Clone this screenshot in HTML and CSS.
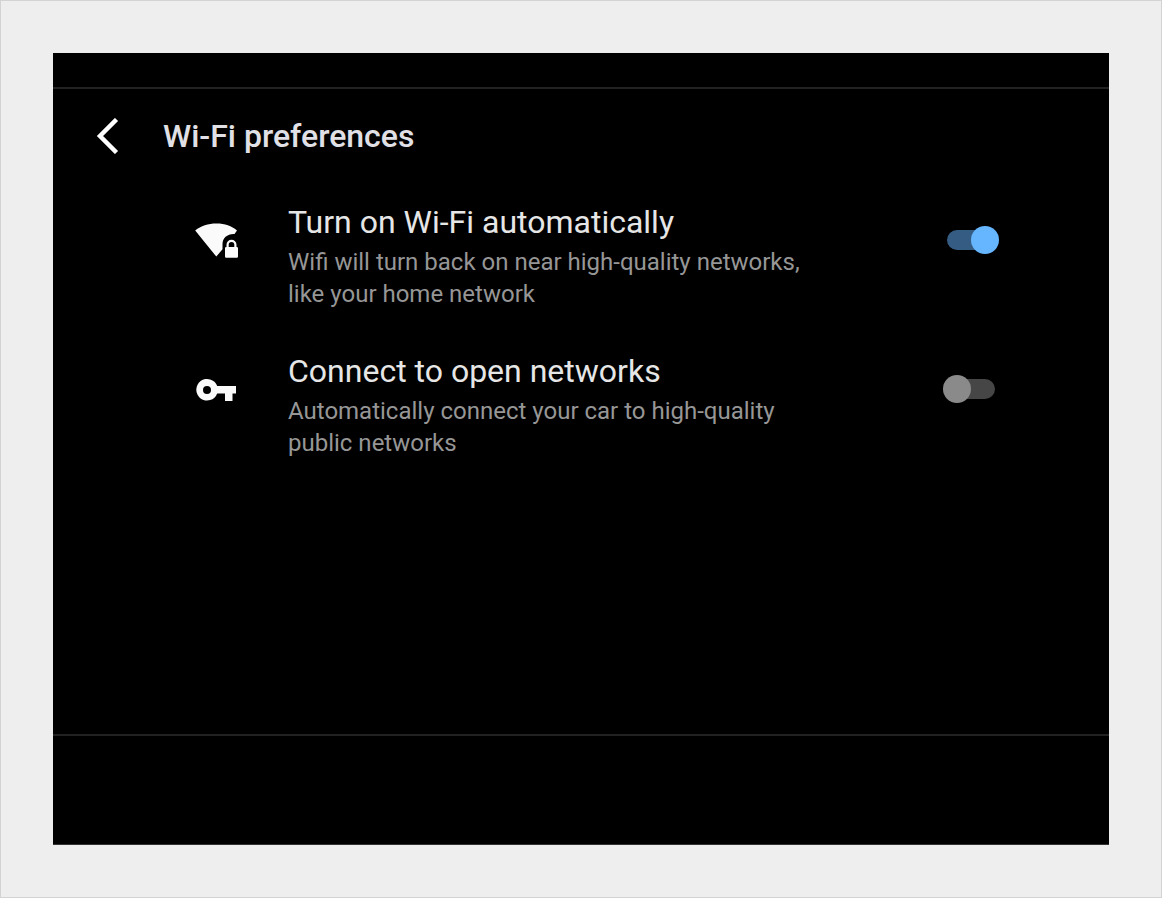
FILE: index.html
```html
<!DOCTYPE html>
<html lang="en">
<head>
  <meta charset="UTF-8" />
  <meta name="viewport" content="width=device-width, initial-scale=1" />
  <title>Wi-Fi preferences</title>
  <link rel="stylesheet" href="styles.css">
</head>
<body>
  <div class="screen">
    <div class="status-bar"></div>

    <main>
      <header class="toolbar">
        <button class="back" type="button" aria-label="Back">
          <svg viewBox="0 0 24 36" width="24" height="36" fill="none" stroke="#fff" stroke-width="4.500">
            <path d="M21.500 1.500 5 18l16.500 16.500" />
          </svg>
        </button>
        <h1>Wi-Fi preferences</h1>
      </header>

      <div class="preferences">
        <div class="preference">
          <svg class="icon" viewBox="0 0 48 48" width="48" height="48" fill="#fafafa">
            <path d="M3.200 14.500C9 9.800 16 7.500 24.500 7.500S39.500 9.800 45 14.500L42.500 18C35.500 17.600 30.500 22 30.500 28v5.200L24.300 40.600Z" />
            <path fill-rule="evenodd" d="M34.500 31v-2.300a5 5 0 0 1 10 0V31h.3q1.200 0 1.200 1.200v8.400q0 1.200-1.200 1.200H34.200q-1.200 0-1.200-1.200v-8.400q0-1.200 1.200-1.200zM36.700 31h5.600v-2.300a2.800 2.800 0 0 0-5.600 0z" />
          </svg>
          <label for="autoWifi">
            <span class="title">Turn on Wi-Fi automatically</span>
            <span class="summary">Wifi will turn back on near high-quality networks, like your home network</span>
          </label>
          <input class="switch" type="checkbox" id="autoWifi" checked>
        </div>

        <div class="preference">
          <svg class="icon" viewBox="0 0 48 48" width="48" height="48" fill="#fafafa">
            <path fill-rule="evenodd" d="M25.200 21H44v7.500h-3.500V36h-7.500v-7.500h-7.800a10.800 10.800 0 1 1 0-7.500zM15 21a4 4 0 1 0 0 8 4 4 0 0 0 0-8z" />
          </svg>
          <label for="openNetworks">
            <span class="title">Connect to open networks</span>
            <span class="summary">Automatically connect your car to high-quality public networks</span>
          </label>
          <input class="switch" type="checkbox" id="openNetworks">
        </div>
      </div>
    </main>

    <div class="nav-bar"></div>
  </div>
</body>
</html>
```
FILE: styles.css
```css
* { box-sizing: border-box; }

body {
  margin: 0;
  padding: 52px;
  min-height: 100vh;
  display: flex;
  border: 1px solid #d3d3d3;
  background: #eee;
  font-family: Roboto, "Liberation Sans", sans-serif;
}

.screen {
  flex: 1;
  display: flex;
  flex-direction: column;
  background: #000;
  border-bottom: 1px solid #333;
}

.status-bar {
  height: 36px;
  border-bottom: 2px solid #222;
}

main {
  flex: 1;
}

.nav-bar {
  height: 110px;
  border-top: 2px solid #222;
}

.toolbar {
  display: flex;
  align-items: center;
  gap: 44px;
  height: 94px;
  padding-left: 42px;
}

.back {
  display: flex;
  padding: 0;
  border: none;
  background: none;
  cursor: pointer;
}

h1 {
  margin: 0;
  font-size: 32px;
  line-height: 40px;
  font-weight: 500;
  color: #e0e0e6;
}

.preferences {
  display: flex;
  flex-direction: column;
  gap: 41px;
  padding: 19px 114px 40px 139px;
}

.preference {
  display: grid;
  grid-template-columns: 48px 1fr 48px;
  column-gap: 48px;
  align-items: start;
}

.preference label {
  max-width: 544px;
}

.icon {
  margin-top: 14px;
}

.title,
.summary {
  display: block;
}

.title {
  margin-bottom: 4px;
  font-size: 32px;
  line-height: 40px;
  color: #e6e6e6;
}

.summary {
  font-size: 24px;
  line-height: 32px;
  color: #969696;
}

.switch {
  appearance: none;
  position: relative;
  width: 48px;
  height: 20px;
  margin: 28px 0 0;
  border-radius: 10px;
  background: #464646;
  cursor: pointer;
}

/* thumb hangs 4px over the track on each side */
.switch::before {
  content: "";
  position: absolute;
  top: -4px;
  left: -4px;
  width: 28px;
  height: 28px;
  border-radius: 50%;
  background: #8a8a8a;
}

.switch:checked {
  background: #355d84;
}

.switch:checked::before {
  left: auto;
  right: -4px;
  background: #66b5ff;
}
```
